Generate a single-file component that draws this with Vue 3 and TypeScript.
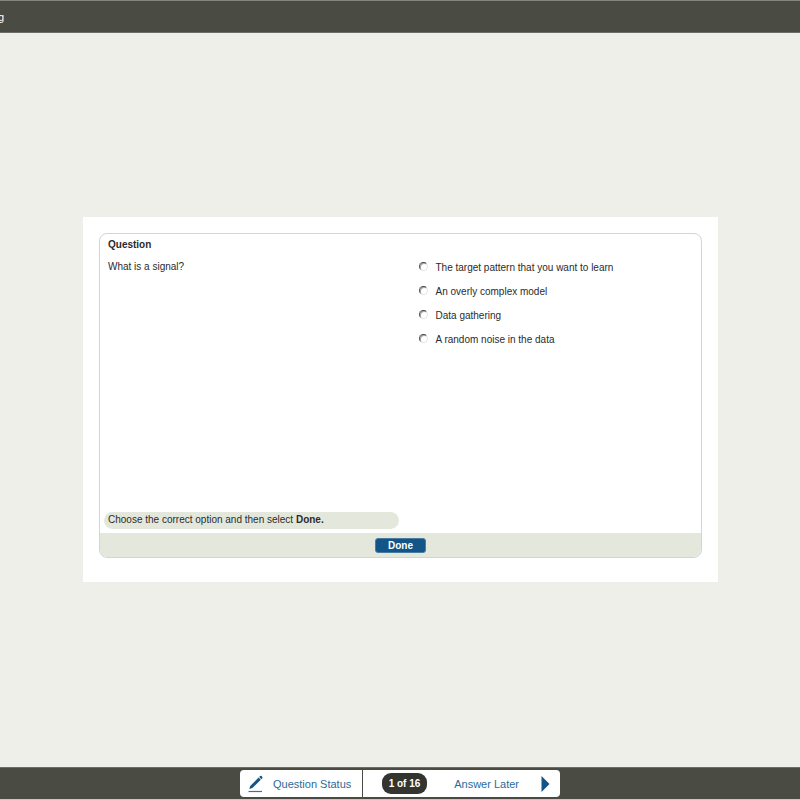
<script setup lang="ts">
import { ref } from 'vue'

const courseTitle = 'g'
const question = 'What is a signal?'
const options: string[] = [
  'The target pattern that you want to learn',
  'An overly complex model',
  'Data gathering',
  'A random noise in the data',
]
const selected = ref<number | null>(null)
const current = 1
const total = 16
</script>

<template>
  <div class="page">
    <header class="top-bar">{{ courseTitle }}</header>

    <main class="stage">
      <section class="panel">
        <form class="card" @submit.prevent>
          <div class="body">
            <div class="prompt">
              <h1 class="heading">Question</h1>
              <p id="question-text" class="text">{{ question }}</p>
              <p class="hint">Choose the correct option and then select <b>Done.</b></p>
            </div>
            <div class="options" role="radiogroup" aria-labelledby="question-text">
              <label v-for="(option, i) in options" :key="option" class="option">
                <input v-model="selected" class="radio" type="radio" name="answer" :value="i" />
                <span>{{ option }}</span>
              </label>
            </div>
          </div>
          <div class="actions">
            <button class="done" type="submit">Done</button>
          </div>
        </form>
      </section>
    </main>

    <footer class="bottom-bar">
      <nav class="nav">
        <button class="nav-button status" type="button">
          <svg width="16" height="18" viewBox="0 0 16 18" aria-hidden="true">
            <path d="M1.3 14 L2.2 11 L10.6 2.6 L12.8 4.8 L4.4 13.1 Z" fill="#135586" />
            <path d="M11.2 2 L12.2 1 Q12.9 .5 13.5 1.1 L14.2 1.8 Q14.8 2.5 14.3 3.2 L13.4 4.2 Z" fill="#135586" />
            <path d="M0.5 16.5 H14" stroke="#3c7099" stroke-width="1.2" />
          </svg>
          Question Status
        </button>
        <div class="pager">
          <span class="count">{{ current }} of {{ total }}</span>
          <button class="nav-button later" type="button">
            Answer Later
            <svg width="9" height="16" viewBox="0 0 9 16" aria-hidden="true">
              <path d="M0.5 0 L8.5 8 L0.5 16 Z" fill="#135586" />
            </svg>
          </button>
        </div>
      </nav>
    </footer>
  </div>
</template>

<style>
body {
  margin: 0;
  background: #eeefe9;
}
</style>

<style scoped>
.page {
  display: flex;
  flex-direction: column;
  box-sizing: border-box;
  min-height: 100vh;
  background: #eeefe9;
  color: #2b2b2b;
  font: 10px/12px "Liberation Sans", Arial, sans-serif;
}

.top-bar {
  box-sizing: border-box;
  height: 33px;
  padding-top: 8px;
  border-top: 1px solid #85867f;
  border-bottom: 1px solid #6d6e66;
  background: #4a4b42;
  color: #fff;
  font-size: 11px;
  line-height: 16px;
  text-indent: -2px;
}

.stage {
  display: flex;
  flex: 1;
  align-items: center;
  padding: 0 82px 2px 83px;
}

.panel {
  flex: 1;
  padding: 16px 16px 24px;
  background: #fff;
}

.card {
  overflow: hidden;
  border: 1px solid #ccd5e1;
  border-radius: 8px;
}

.body {
  display: grid;
  grid-template-columns: 1fr 1fr;
  min-height: 299px;
}

.prompt {
  display: flex;
  flex-direction: column;
  padding: 5px 2px 4px 4px;
}

.heading,
.text {
  margin: 0 0 10px;
  padding-left: 4px;
  font-size: 10px;
}

.hint {
  margin: auto 0 0;
  padding: 2px 4px 3px;
  border-radius: 9px;
  background: #e3e7dc;
}

.options {
  display: flex;
  flex-direction: column;
  gap: 12px;
  padding: 28px 0 0 18px;
}

.option {
  display: flex;
  gap: 8px;
}

.radio {
  appearance: none;
  box-sizing: border-box;
  width: 9px;
  height: 9px;
  margin: 0;
  border: 1px solid;
  border-color: #444 #e4e4e4 #e4e4e4 #555;
  border-radius: 50%;
  background: #fff;
  box-shadow: inset 1px 1px 0 #aaa;
}

.radio:checked {
  background: radial-gradient(circle, #222 2px, #fff 3px);
}

.actions {
  display: flex;
  justify-content: center;
  padding: 5px 0 4px;
  background: #e3e7dc;
}

.done {
  width: 51px;
  height: 15px;
  padding: 0;
  border: 1px solid #4a7ca2;
  border-radius: 3px;
  background: #135586;
  color: #fff;
  font: bold 10px/13px "Liberation Sans", Arial, sans-serif;
}

.bottom-bar {
  display: flex;
  box-sizing: border-box;
  justify-content: center;
  height: 33px;
  padding: 2px 0;
  border-top: 1px solid #6d6e66;
  border-bottom: 1px solid #c6c7c1;
  background: #4a4b42;
}

.nav {
  display: flex;
  gap: 1px;
  width: 320px;
}

.nav-button {
  display: flex;
  align-items: center;
  padding: 0;
  border: 0;
  background: #fff;
  color: #2d6a9b;
  font: 11px/16px "Liberation Sans", Arial, sans-serif;
}

.status {
  gap: 9px;
  width: 122px;
  padding-left: 8px;
  border-radius: 4px 0 0 4px;
}

.pager {
  display: flex;
  flex: 1;
  align-items: center;
  justify-content: space-between;
  padding: 0 10px 0 19px;
  border-radius: 0 4px 4px 0;
  background: #fff;
}

.count {
  width: 45px;
  border-radius: 9px;
  background: #33352e;
  color: #fff;
  font-weight: bold;
  line-height: 21px;
  text-align: center;
}

.later {
  gap: 22px;
}
</style>
